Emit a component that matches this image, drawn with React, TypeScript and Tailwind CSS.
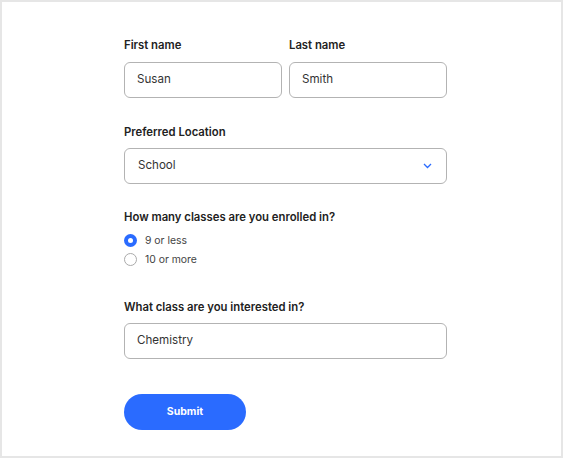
import React from "react";

export default function App() {
  return (
    <div className="w-[563px] h-[458px] border-2 border-[#e6e6e6] bg-white" style={{ fontFamily: "Inter, 'Liberation Sans', sans-serif" }}>
      <div className="ml-[122px] pt-[35px] w-[323px] flex flex-col text-[#222]">
        <div className="flex gap-[7px]">
          <div className="flex flex-col flex-1">
            <label className="text-[11.3px] leading-[16px] font-semibold mb-[9px]">First name</label>
            <div className="h-[36px] rounded-[6px] border border-[#b3b3b3] flex items-center px-[12px] text-[11.6px] text-[#333]">Susan</div>
          </div>
          <div className="flex flex-col flex-1">
            <label className="text-[11.3px] leading-[16px] font-semibold mb-[9px]">Last name</label>
            <div className="h-[36px] rounded-[6px] border border-[#b3b3b3] flex items-center px-[12px] text-[11.6px] text-[#333]">Smith</div>
          </div>
        </div>
        <label className="mt-[26px] text-[11.3px] leading-[16px] font-semibold mb-[8px]">Preferred Location</label>
        <div className="h-[36px] rounded-[6px] border border-[#b3b3b3] flex items-center justify-between pl-[13px] pr-[14px] text-[11.6px] text-[#333]">
          <span>School</span>
          <svg width="9" height="6" viewBox="0 0 9 6" fill="none">
            <path d="M1 1l3.5 3.5L8 1" stroke="#2a6bff" strokeWidth="1.3" />
          </svg>
        </div>
        <label className="mt-[25px] text-[11.3px] leading-[16px] font-semibold mb-[9px]">How many classes are you enrolled in?</label>
        <div className="flex flex-col gap-[6px]">
          <div className="flex items-center h-[13px]">
            <span className="w-[13px] h-[13px] rounded-full bg-[#2a6bff] flex items-center justify-center">
              <span className="w-[5px] h-[5px] rounded-full bg-white" />
            </span>
            <span className="ml-[8px] text-[10.4px] text-[#444]">9 or less</span>
          </div>
          <div className="flex items-center h-[13px]">
            <span className="w-[13px] h-[13px] rounded-full border border-[#aaa] bg-white" />
            <span className="ml-[8px] text-[10.4px] text-[#444]">10 or more</span>
          </div>
        </div>
        <label className="mt-[33px] text-[11.3px] leading-[16px] font-semibold mb-[8px]">What class are you interested in?</label>
        <div className="h-[36px] rounded-[6px] border border-[#b3b3b3] flex items-center px-[12px] text-[11.6px] text-[#333]">Chemistry</div>
        <button className="mt-[35px] w-[122px] h-[36px] rounded-full bg-[#2a6bff] text-white text-[10.5px] font-bold">Submit</button>
      </div>
    </div>
  );
}
